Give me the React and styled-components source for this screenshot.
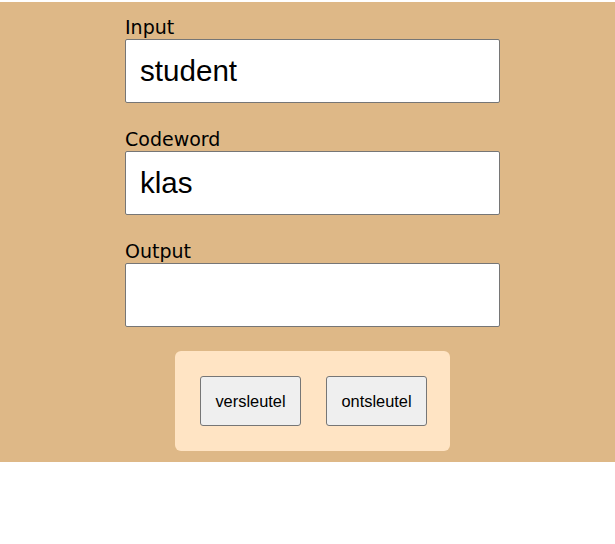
import React from "react";
import styled, { createGlobalStyle } from "styled-components";

const Global = createGlobalStyle`
  html, body { margin: 0; padding: 0; background: #fff; }
  body { font-family: "Liberation Sans", Arial, sans-serif; }
`;

const Page = styled.main`
  margin-top: 2px;
  height: 460px;
  background: #deb887;
  display: flex;
  flex-direction: column;
  align-items: center;
  padding-left: 10px;
  box-sizing: border-box;
`;

const Form = styled.div`
  width: 375px;
  display: flex;
  flex-direction: column;
  padding-top: 14px;
`;

const Field = styled.div`
  display: flex;
  flex-direction: column;
  margin-bottom: 25px;
`;

const Label = styled.label`
  font-family: "DejaVu Sans", Verdana, sans-serif;
  font-size: 19px;
  line-height: 23px;
  color: #000;
`;

const TextBox = styled.input`
  box-sizing: border-box;
  width: 375px;
  height: 64px;
  border: 1px solid #767676;
  border-radius: 2px;
  padding: 0 14px;
  font-family: "Liberation Sans", Arial, sans-serif;
  font-size: 29.6px;
  color: #000;
  background: #fff;
  outline: none;
`;

const Panel = styled.div`
  align-self: center;
  margin-top: -1px;
  width: 275px;
  height: 100px;
  box-sizing: border-box;
  background: #ffe4c4;
  border-radius: 6px;
  display: flex;
  align-items: center;
  justify-content: flex-start;
  padding-left: 25px;
  gap: 25px;
`;

const Button = styled.button`
  box-sizing: border-box;
  width: 101px;
  height: 50px;
  border: 1px solid #767676;
  border-radius: 3px;
  background: #efefef;
  font-family: "Liberation Sans", Arial, sans-serif;
  font-size: 16.4px;
  color: #000;
  padding: 0;
`;

export default function App() {
  return (
    <>
      <Global />
      <Page>
        <Form>
          <Field>
            <Label>Input</Label>
            <TextBox defaultValue="student" />
          </Field>
          <Field>
            <Label>Codeword</Label>
            <TextBox defaultValue="klas" />
          </Field>
          <Field>
            <Label>Output</Label>
            <TextBox defaultValue="" />
          </Field>
          <Panel>
            <Button>versleutel</Button>
            <Button>ontsleutel</Button>
          </Panel>
        </Form>
      </Page>
    </>
  );
}
